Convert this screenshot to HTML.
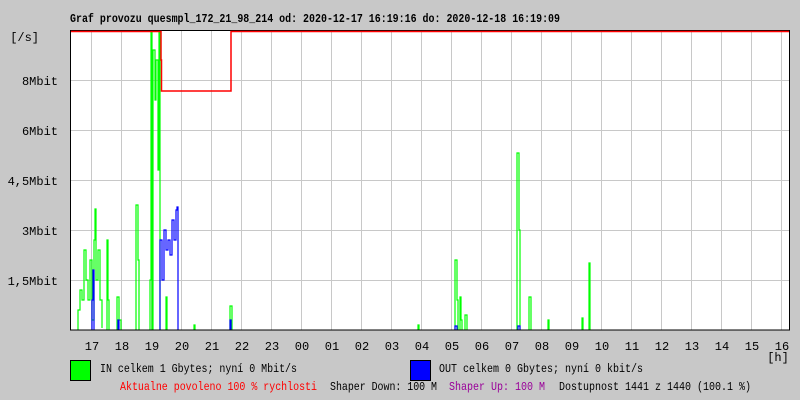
<!DOCTYPE html>
<html><head><meta charset="utf-8"><style>
html,body{margin:0;padding:0;background:#c8c8c8;}
svg{display:block}
text{font-family:"Liberation Mono","DejaVu Sans Mono",monospace;font-size:12px;fill:#000}
</style></head><body>
<svg width="800" height="400" viewBox="0 0 800 400" xmlns="http://www.w3.org/2000/svg">
<rect width="800" height="400" fill="#c8c8c8"/>
<text x="70" y="22" font-weight="bold" textLength="490" lengthAdjust="spacingAndGlyphs">Graf provozu quesmpl_172_21_98_214 od: 2020-12-17 16:19:16 do: 2020-12-18 16:19:09</text>
<rect x="70" y="30" width="720" height="300" fill="#fff"/>
<g stroke="#c8c8c8" stroke-width="1">
<path d="M91.5 31V330M121.5 31V330M151.5 31V330M181.5 31V330M211.5 31V330M241.5 31V330M271.5 31V330M301.5 31V330M331.5 31V330M361.5 31V330M391.5 31V330M421.5 31V330M451.5 31V330M481.5 31V330M511.5 31V330M541.5 31V330M571.5 31V330M601.5 31V330M631.5 31V330M661.5 31V330M691.5 31V330M721.5 31V330M751.5 31V330M781.5 31V330"/>
<path d="M70 80.5H790M70 130.5H790M70 180.5H790M70 230.5H790M70 280.5H790"/>
</g>
<g style="stroke:#00ff00;fill:none" stroke-width="1.2">
<path d="M78 330V310H80V290H82V300H84V250H86V280H88V300H90V260H92V320H94V240H95V209H96V280H98V250H100V300H102V328"/>
<path d="M107 330V240H108V300H109V330"/>
<path d="M117 330V297H119V320H121V330"/>
<path d="M136 330V205H138V260H139V330"/>
<path d="M150 330V280H151V31H152V330"/>
<path d="M153 330V50H155V100H156V60H158V170H159V31H160V330"/>
<path d="M166 330V297H167V330"/>
<path d="M194 330V325H195V330"/>
<path d="M230 330V306H232V330"/>
<path d="M418 330V325H419V330"/>
<path d="M455 330V260H457V300H458V330"/>
<path d="M460 330V297H461V320H462V330"/>
<path d="M465 330V315H467V330"/>
<path d="M517 330V153H519V230H520V330"/>
<path d="M529 330V297H531V330"/>
<path d="M548 330V320H549V330"/>
<path d="M582 330V318H583V330"/>
<path d="M589 330V263H590V330"/>
</g>
<g style="stroke:#0000ff;fill:none" stroke-width="1.2">
<path d="M92 330V300H93V270H94V330"/>
<path d="M118 330V320H119V330"/>
<path d="M160 330V240H162V280H164V230H166V250H168V240H170V255H172V220H174V240H176V210H177V207H178V330"/>
<path d="M230 330V320H231V330"/>
<path d="M455 330V326H457V330"/>
<path d="M518 330V326H520V330"/>
</g>
<rect x="70.5" y="30.5" width="719" height="299.5" style="fill:none;stroke:#000"/>
<path d="M71 31.5H161V60H161.5V91H231V31.5H789" style="stroke:#ff0000;fill:none;stroke-width:1.5"/>
<g text-anchor="end">
<text x="39" y="41">[/s]</text>
<text x="58" y="85">8Mbit</text>
<text x="58" y="135">6Mbit</text>
<text x="58" y="185">4,5Mbit</text>
<text x="58" y="235">3Mbit</text>
<text x="58" y="285">1,5Mbit</text>
</g>
<g text-anchor="middle">
<text x="92" y="350">17</text><text x="122" y="350">18</text><text x="152" y="350">19</text><text x="182" y="350">20</text><text x="212" y="350">21</text><text x="242" y="350">22</text><text x="272" y="350">23</text><text x="302" y="350">00</text><text x="332" y="350">01</text><text x="362" y="350">02</text><text x="392" y="350">03</text><text x="422" y="350">04</text><text x="452" y="350">05</text><text x="482" y="350">06</text><text x="512" y="350">07</text><text x="542" y="350">08</text><text x="572" y="350">09</text><text x="602" y="350">10</text><text x="632" y="350">11</text><text x="662" y="350">12</text><text x="692" y="350">13</text><text x="722" y="350">14</text><text x="752" y="350">15</text><text x="782" y="350">16</text>
<text x="778" y="361">[h]</text>
</g>
<rect x="70.5" y="360.5" width="20" height="20" fill="#00ff00" stroke="#000"/>
<text x="100" y="372" textLength="197" lengthAdjust="spacingAndGlyphs">IN celkem 1 Gbytes; nyní 0 Mbit/s</text>
<rect x="410.5" y="360.5" width="20" height="20" fill="#0000ff" stroke="#000"/>
<text x="439" y="372" textLength="204" lengthAdjust="spacingAndGlyphs">OUT celkem 0 Gbytes; nyní 0 kbit/s</text>
<text x="120" y="390" style="fill:#ff0000" textLength="197" lengthAdjust="spacingAndGlyphs">Aktualne povoleno 100 % rychlosti</text>
<text x="330" y="390" textLength="107" lengthAdjust="spacingAndGlyphs">Shaper Down: 100 M</text>
<text x="449" y="390" style="fill:#990099" textLength="96" lengthAdjust="spacingAndGlyphs">Shaper Up: 100 M</text>
<text x="559" y="390" textLength="192" lengthAdjust="spacingAndGlyphs">Dostupnost 1441 z 1440 (100.1 %)</text>
</svg>
</body></html>
